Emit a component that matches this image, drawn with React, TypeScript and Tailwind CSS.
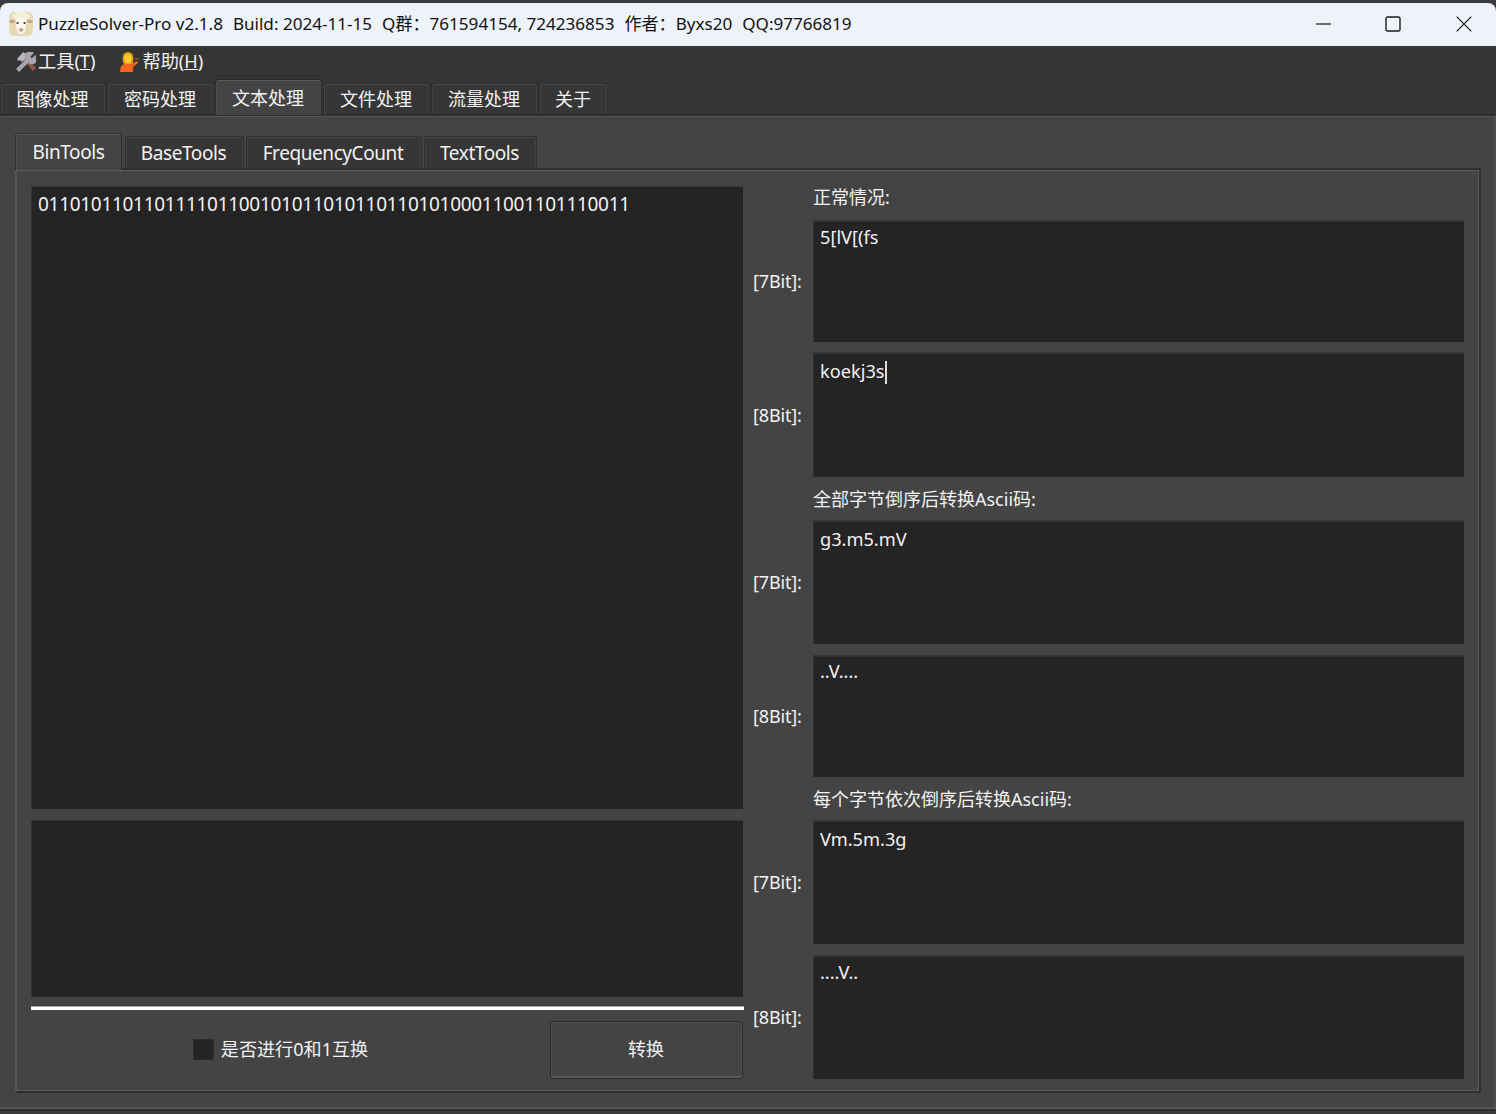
import React from "react";

const font = { fontFamily: '"Noto Sans", "Noto Sans CJK SC", sans-serif' };

function Sheep() {
  return (
    <svg width="24" height="24" viewBox="0 0 24 24" className="shrink-0">
      <rect x="0" y="0" width="24" height="24" rx="5" fill="#e6dab4" />
      <ellipse cx="12" cy="4" rx="9" ry="4" fill="#f5efd9" />
      <ellipse cx="3.2" cy="9.5" rx="3" ry="1.7" fill="#c9a888" />
      <ellipse cx="20.8" cy="9.5" rx="3" ry="1.7" fill="#c9a888" />
      <path d="M6.5 7 Q12 3.5 17.5 7 L16.5 17 Q15.5 22 12 22 Q8.5 22 7.5 17 Z" fill="#fbf8ef" />
      <circle cx="8.5" cy="11" r="1.1" fill="#33281f" />
      <circle cx="15.5" cy="11" r="1.1" fill="#33281f" />
      <path d="M9.5 17 Q12 15.5 14.5 17 Q13.5 20 12 20 Q10.5 20 9.5 17 Z" fill="#c99a8a" />
    </svg>
  );
}

function Tools() {
  return (
    <svg width="20" height="20" viewBox="0 0 20 20" className="shrink-0">
      <path d="M6 6 L17 19 L20 16 L9 3 Z" fill="#8a5a44" />
      <path d="M1 7 L7 0 L12 3 L11 5 L6 10 L4 8 L2.5 9 Z" fill="#b9b4bd" />
      <path d="M0 17 L10 7 L13 10 L3 20 Z" fill="#a9a4ad" />
      <path d="M10 8 A5 5 0 0 1 18 1 L14.5 4.5 L15.5 6.5 L19.5 3 A5 5 0 0 1 12.5 11 Z" fill="#a9a4ad" />
    </svg>
  );
}

function Person() {
  return (
    <svg width="19" height="21" viewBox="0 0 19 21" className="shrink-0 block">
      <path d="M0 21 Q0 14 4 13 L11 13 L13 15 L13 21 Z" fill="#f4641c" />
      <path d="M11 13 L17 10 L18 12 L13 16 Z" fill="#f4641c" />
      <path d="M3 11 Q1.5 1 8 1 Q14.5 1 13 11 L12 13 L4 13 Z" fill="#e8a400" />
      <ellipse cx="8" cy="7.5" rx="3.6" ry="4.2" fill="#ffc83d" />
      <rect x="14.5" y="7" width="4.5" height="1.6" fill="#8a5a20" />
    </svg>
  );
}

function TopTab({ label, active, w }: { label: string; active?: boolean; w: string }) {
  return active ? (
    <div className={`${w} h-[36px] mb-[-1px] pr-[1px] bg-[#444444] border border-b-0 border-[#2e2e2e] rounded-t-[3px] shadow-[inset_0_1px_0_#5a5a5a,inset_1px_0_0_#4f4f4f] flex items-start justify-center pt-[5px] text-[18px] leading-[26px] text-[#f4f4f4] relative z-10`}>
      {label}
    </div>
  ) : (
    <div className={`${w} h-[31px] pr-[1px] bg-[#363636] border border-b-0 border-[#2e2e2e] rounded-t-[3px] shadow-[inset_0_1px_0_#4a4a4a,inset_1px_0_0_#434343,inset_-1px_0_0_#434343] flex items-start justify-center pt-[2px] text-[18px] leading-[26px] text-[#f4f4f4]`}>
      {label}
    </div>
  );
}

function BitRow({ bit, h, pt, mt, children }: { bit: string; h: string; pt: string; mt?: string; children?: React.ReactNode }) {
  return (
    <div className={`flex items-center gap-[10px] ${mt ?? ""}`}>
      <div className="w-[50px] shrink-0 text-[18px] leading-[26px] text-[#f2f2f2] whitespace-nowrap tracking-[-0.15px]">
        [{bit}Bit]:
      </div>
      <div className={`${h} ${pt} min-w-0 flex-1 bg-[#242424] border-t-2 border-l border-[#343434] pl-[6px] text-[18.2px] leading-[28px] text-[#f2f2f2]`}>
        {children}
      </div>
    </div>
  );
}

function SectionLabel({ text, h, items, lead }: { text: string; h: string; items: string; lead: string }) {
  return (
    <div className={`${h} ${lead} pl-[60px] flex ${items} text-[18px] text-[#f2f2f2]`}>{text}</div>
  );
}

const subTab =
  "h-[32px] bg-[#363636] border border-b-0 border-[#2e2e2e] rounded-t-[3px] shadow-[inset_0_1px_0_#4a4a4a,inset_1px_0_0_#434343,inset_-1px_0_0_#434343] flex justify-center pt-[2px] pr-[2px] leading-[28px] text-[#f2f2f2] tracking-[-0.42px]";

export default function App() {
  return (
    <div style={font} className="w-[1496px] h-[1114px] overflow-hidden bg-[#3a3a3a] flex flex-col">
      <div className="h-[3px] shrink-0 bg-[#39393b]" />
      {/* title bar */}
      <div className="h-[43px] shrink-0 bg-[#eef3fa] rounded-t-[8px] flex items-center pl-[9px] pb-[2px] text-[#111111] text-[17.08px] whitespace-nowrap">
        <Sheep />
        <span className="ml-[5px]">PuzzleSolver-Pro v2.1.8</span>
        <span className="ml-[10px]">Build: 2024-11-15</span>
        <span className="ml-[10px]">Q群：761594154, 724236853</span>
        <span className="ml-[10px]">作者：Byxs20</span>
        <span className="ml-[10px]">QQ:97766819</span>
        <div className="ml-auto flex h-full items-center">
          <div className="w-[69px] flex justify-center">
            <svg width="16" height="2" viewBox="0 0 16 2"><rect width="15" height="1.2" y="0.4" fill="#1a1a1a" /></svg>
          </div>
          <div className="w-[69px] flex justify-center">
            <svg width="16" height="16" viewBox="0 0 16 16"><rect x="1" y="1" width="14" height="14" rx="1.6" fill="none" stroke="#1a1a1a" strokeWidth="1.4" /></svg>
          </div>
          <div className="w-[69px] flex justify-center pl-[4px]">
            <svg width="16" height="16" viewBox="0 0 16 16"><path d="M0.7 0.7 L15.3 15.3 M15.3 0.7 L0.7 15.3" stroke="#1a1a1a" strokeWidth="1.2" fill="none" /></svg>
          </div>
        </div>
      </div>
      {/* menu */}
      <div className="h-[30px] shrink-0 bg-[#353535] border-b border-[#303030] flex items-center pl-[16px] pt-[2px] text-[18.2px] text-[#f2f2f2] whitespace-nowrap">
        <Tools />
        <span className="ml-[2px]">工具(<u>T</u>)</span>
        <span className="ml-[25px]"><Person /></span>
        <span className="ml-[3px]">帮助(<u>H</u>)</span>
      </div>
      {/* main tabs */}
      <div className="h-[38px] shrink-0 bg-[#353535] flex items-end gap-[1px]">
        <TopTab label="图像处理" w="w-[106px]" />
        <TopTab label="密码处理" w="w-[107px]" />
        <TopTab label="文本处理" active w="w-[107px]" />
        <TopTab label="文件处理" w="w-[107px]" />
        <TopTab label="流量处理" w="w-[107px]" />
        <TopTab label="关于" w="w-[69px]" />
      </div>
      {/* outer pane */}
      <div className="h-[997px] shrink-0 bg-[#444444] border-t-2 border-b-2 border-t-[#2f2f2f] border-b-[#2f2f2f] shadow-[inset_0_1px_0_#555555,inset_0_-2px_0_#565656,inset_-2px_0_0_#4e4e4e] pl-[15px] pr-[15px] pt-[16px]">
        {/* sub tabs */}
        <div className="h-[36px] flex items-end gap-[2px] text-[19px]">
          <div className="w-[107px] h-[37px] mb-[-2px] bg-[#444444] border border-b-0 border-[#2e2e2e] rounded-t-[3px] shadow-[inset_0_1px_0_#5a5a5a,inset_1px_0_0_#505050] flex justify-center pt-[4px] leading-[28px] text-[#f2f2f2] tracking-[-0.42px] relative z-10">BinTools</div>
          <div className={`ml-[1px] w-[119px] ${subTab}`}>BaseTools</div>
          <div className={`w-[176px] ${subTab}`}>FrequencyCount</div>
          <div className={`w-[113px] ${subTab}`}>TextTools</div>
        </div>
        {/* inner pane */}
        <div className="h-[925px] w-[1466px] bg-[#444444] border-t-2 border-r-2 border-b-2 border-[#2f2f2f] border-l-2 border-l-[#555555] shadow-[inset_0_1px_0_#5a5a5a,inset_-1px_-1px_0_#585858] pl-[14px] pt-[16px] flex">
          {/* left */}
          <div className="w-[712px] shrink-0 flex flex-col">
            <div className="h-[623px] bg-[#242424] border-t border-l border-[#343434] pl-[6px] pt-[3px] text-[19px] leading-[28px] text-[#f2f2f2]">
              <span className="tracking-[-0.3px]">01101011011011110110010101101011011010100011001101110011</span>
            </div>
            <div className="h-[177px] mt-[11px] bg-[#242424] border-t border-l border-[#343434]" />
            <div className="h-[4px] mt-[9px] w-[713px] bg-white border-t border-[#aaaaaa]" />
            <div className="mt-[11px] flex items-stretch h-[58px]">
              <div className="w-[519px] pr-[20px] pb-[1px] flex items-center justify-center text-[18.1px] text-[#f2f2f2]">
                <div className="w-[21px] h-[21px] bg-[#242424] border border-[#2c2c2c]" />
                <span className="ml-[7px] whitespace-nowrap">是否进行0和1互换</span>
              </div>
              <div className="w-[193px] pb-[1px] pr-[1px] bg-[#444444] border border-[#2b2b2b] rounded-[3px] shadow-[inset_0_1px_0_#4f4f4f,inset_0_-2px_0_#575757,inset_1px_0_0_#4f4f4f,inset_-1px_0_0_#4f4f4f] flex items-center justify-center text-[18px] text-[#f2f2f2]">转换</div>
            </div>
          </div>
          {/* right */}
          <div className="ml-[10px] w-[711px] shrink-0 flex flex-col">
            <SectionLabel text="正常情况:" h="h-[34px]" items="items-start" lead="leading-[22px]" />
            <BitRow bit="7" h="h-[122px]" pt="pt-[1px]">5[lV[(fs</BitRow>
            <BitRow bit="8" h="h-[125px]" pt="pt-[3px]" mt="mt-[10px]">
              koekj3s<span className="inline-block w-[2px] h-[23px] bg-[#dddddd] align-[-6px]" />
            </BitRow>
            <SectionLabel text="全部字节倒序后转换Ascii码:" h="h-[43px]" items="items-center" lead="leading-[24px]" />
            <BitRow bit="7" h="h-[124px]" pt="pt-[3px]">g3.m5.mV</BitRow>
            <BitRow bit="8" h="h-[122px]" pt="pt-[0px]" mt="mt-[11px]">..V....</BitRow>
            <SectionLabel text="每个字节依次倒序后转换Ascii码:" h="h-[43px]" items="items-center" lead="leading-[24px]" />
            <BitRow bit="7" h="h-[124px]" pt="pt-[3px]">Vm.5m.3g</BitRow>
            <BitRow bit="8" h="h-[124px]" pt="pt-[1px]" mt="mt-[11px]">....V..</BitRow>
          </div>
        </div>
      </div>
      <div className="flex-1 bg-[#3a3a3a]" />
    </div>
  );
}
